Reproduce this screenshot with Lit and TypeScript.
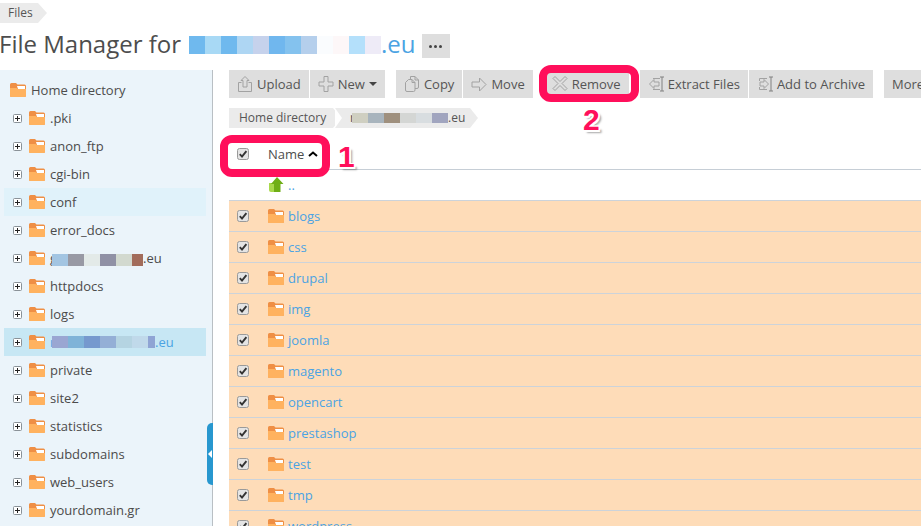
import { LitElement, css, html, svg } from "lit";
import { customElement } from "lit/decorators.js";

type Blur = string[];

const titleBlur: Blur = ["#6fb9ee", "#a8d9f5", "#6fb9ee", "#aed6f3", "#c6d2ec", "#70b7ee", "#84c2ee", "#b5cfec", "#fafcfe", "#fdf7f8", "#b4e0fb", "#eeebf7"];
const crumbBlur: Blur = ["#cfcfc1", "#a8b4bd", "#9f907e", "#d4d6d4", "#d8dde0", "#a1a5bf"];
const gBlur: Blur = ["#a3c5e2", "#9899a4", "#e3eae8", "#9091a5", "#d2d9cf", "#a26c5b"];
const siteBlur: Blur = ["#9aa6d2", "#7fb3d8", "#7699ce", "#94afd6", "#b5d4e2", "#c0d9ea", "#8fa4d4"];

const treeRows: { name: string; blur?: Blur; last?: number; cls?: string }[] = [
  { name: ".pki" },
  { name: "anon_ftp" },
  { name: "cgi-bin" },
  { name: "conf", cls: "hover" },
  { name: "error_docs" },
  { name: "g", blur: gBlur, last: 11, cls: "low" },
  { name: "httpdocs" },
  { name: "logs" },
  { name: "r", blur: siteBlur, last: 7, cls: "active" },
  { name: "private" },
  { name: "site2" },
  { name: "statistics" },
  { name: "subdomains" },
  { name: "web_users" },
  { name: "yourdomain.gr" },
];

const fileRows = ["blogs", "css", "drupal", "img", "joomla", "magento", "opencart", "prestashop", "test", "tmp", "wordpress"];

const folder = html`<svg class="folder" width="16" height="14" viewBox="0 0 16 14">
  <path d="M0 1.5Q0 0 1.5 0H6L7.5 1.5H14.5Q16 1.5 16 3V12.5Q16 14 14.5 14H1.5Q0 14 0 12.5Z" fill="#ef8f45"/>
  <path d="M7 3H15V6H8Z" fill="#fff"/>
  <path d="M0 5H6.5L8 6H16V12.5Q16 14 14.5 14H1.5Q0 14 0 12.5Z" fill="#ffb25f"/>
</svg>`;

const plus = html`<svg class="plus" width="9" height="9" viewBox="0 0 9 9">
  <rect x=".5" y=".5" width="8" height="8" rx="1" fill="#fff" stroke="#8a9298"/>
  <path d="M2 4.5H7M4.5 2V7" stroke="#222"/>
</svg>`;

const check = html`<svg class="check" width="12" height="12" viewBox="0 0 12 12">
  <rect x=".5" y=".5" width="11" height="11" rx="2" fill="#e4e4e4" stroke="#9a9a9a"/>
  <path d="M2.8 6.2L5 8.6L9.4 3.2" fill="none" stroke="#333" stroke-width="1.9"/>
</svg>`;

const icons = {
  upload: svg`<path d="M4.5 7.5H1.5V16.5H14.5V7.5H11.5"/><path d="M8 1.5L12 5.5H10V12H6V5.5H4Z"/>`,
  add: svg`<path d="M6 1.5H10V7H15V11H10V16.5H6V11H1V7H6Z"/>`,
  copy: svg`<path d="M6.5 4V1.5H11L14.5 5V12Q14.5 13.5 13 13.5H11"/><path d="M11 1.5V5H14.5"/><path d="M4.5 4.5H8L11 7.5V15Q11 16.5 9.5 16.5H3Q1.5 16.5 1.5 15V7.5Z"/><path d="M8 4.5V7.5H11"/>`,
  move: svg`<path d="M1 7H8.5V3L15 9.5L8.5 16V12H1Z"/>`,
  remove: svg`<path d="M3 1.5L8 6.5L13 1.5L15 3.5L10 8.5L15 13.5L13 15.5L8 10.5L3 15.5L1 13.5L6 8.5L1 3.5Z"/>`,
  extract: svg`<path d="M12 2H16M14 2V16M12 16H16" stroke="#808080"/><path d="M5 3.5H12M5 14.5H12"/><path d="M1.5 9L6 4.5V7H11V11H6V13.5Z"/>`,
  archive: svg`<path d="M12 2H16M14 2V16M12 16H16" stroke="#808080"/><path d="M2.5 6V3.5H10M2.5 12V14.5H10"/><path d="M3 7H7V4.5L11.5 9L7 13.5V11H3Z"/>`,
};

@customElement("app-root")
export class AppRoot extends LitElement {
  static styles = css`
    :host {
      display: block;
      position: relative;
      width: 921px;
      height: 526px;
      overflow: hidden;
      background: #fff;
      color: #4b4b4b;
      font-family: "Open Sans", sans-serif;
      font-size: 13px;
      line-height: 18px;
    }
    .crumb-top {
      display: flex;
      height: 20px;
      margin-top: 3px;
    }
    .chip {
      display: flex;
      align-items: center;
      height: 20px;
      background: #ebebeb;
      font-size: 12px;
      color: #555;
      position: relative;
    }
    .chip::after {
      content: "";
      position: absolute;
      left: 100%;
      top: 0;
      border-left: 9px solid #ebebeb;
      border-top: 10px solid transparent;
      border-bottom: 10px solid transparent;
    }
    .crumb-top .chip {
      padding: 0 0 0 8px;
      width: 30px;
    }
    .title {
      display: flex;
      align-items: center;
      height: 42px;
      padding-bottom: 5px;
      font-size: 24px;
      line-height: 30px;
      color: #4d4d4d;
      white-space: nowrap;
      margin-left: -1px;
    }
    .blue {
      color: #4ba3e3;
    }
    .blur {
      display: flex;
      height: 12px;
      flex: none;
    }
    .blur i {
      display: block;
      width: 16px;
      height: 100%;
    }
    .title .blur {
      height: 18px;
      margin-left: 8px;
      margin-top: 1px;
    }
    .stub {
      width: 2px;
      white-space: nowrap;
    }
    .dots {
      width: 28px;
      height: 24px;
      margin-left: 6px;
      margin-top: 4px;
      background: #dedede;
      display: flex;
      align-items: center;
      justify-content: center;
      gap: 2px;
    }
    .dots b {
      width: 3px;
      height: 3px;
      border-radius: 50%;
      background: #444;
    }
    .body {
      display: grid;
      grid-template-columns: 213px 1fr;
      height: 456px;
    }
    aside {
      background: #ebf4fa;
      border-right: 1px solid #b9bfc4;
      padding: 6px 6px 0 4px;
      position: relative;
    }
    .tree-row {
      display: flex;
      align-items: center;
      height: 28px;
      white-space: nowrap;
    }
    .tree-row.root {
      padding-left: 6px;
      color: #4d4d4d;
    }
    .tree-row .plus {
      margin-left: 9px;
      margin-right: 7px;
    }
    .tree-row .folder {
      margin-right: 5px;
    }
    .tree-row.hover {
      background: #e0f2fa;
    }
    .tree-row.active {
      background: #c7e7f4;
      color: #4ba3e3;
    }
    .tree-row.low .blur {
      margin-top: 4px;
    }
    .collapse {
      position: absolute;
      right: -1px;
      top: 353px;
      width: 6px;
      height: 62px;
      background: #2797cf;
      border-radius: 5px 0 0 5px;
    }
    .collapse::after {
      content: "";
      position: absolute;
      left: 1px;
      top: 27px;
      border-right: 4px solid #fff;
      border-top: 4px solid transparent;
      border-bottom: 4px solid transparent;
    }
    main {
      padding-left: 16px;
      min-width: 0;
      overflow: hidden;
    }
    .toolbar {
      display: flex;
      height: 28px;
      gap: 11px;
      white-space: nowrap;
    }
    .group {
      display: flex;
      gap: 1px;
      flex: none;
    }
    .tool {
      display: flex;
      align-items: center;
      gap: 4px;
      height: 28px;
      padding: 0 8px;
      background: #dedede;
      color: #555;
    }
    .tool svg {
      fill: none;
      stroke: #a2a2a2;
      stroke-width: 1;
      flex: none;
    }
    .caret {
      border-top: 4px solid #444;
      border-left: 4px solid transparent;
      border-right: 4px solid transparent;
    }
    .path {
      display: flex;
      height: 20px;
      margin-top: 10px;
      gap: 2px;
    }
    .path .chip {
      white-space: nowrap;
    }
    .path .home {
      width: 94px;
      padding-left: 10px;
    }
    .path .cur {
      width: 120px;
      padding-left: 15px;
    }
    .path .cur::before {
      content: "";
      position: absolute;
      left: 0;
      top: 0;
      border-left: 7px solid #fff;
      border-top: 10px solid transparent;
      border-bottom: 10px solid transparent;
    }
    .path .cur .blur {
      height: 10px;
    }
    .path .home::after,
    .path .cur::after {
      border-left-width: 8px;
    }
    .row {
      display: flex;
      align-items: center;
      height: 30px;
      border-bottom: 1px solid #ccd3da;
      padding-left: 8px;
      white-space: nowrap;
    }
    .row .check {
      margin-right: 19px;
    }
    .row .folder {
      margin-right: 4px;
    }
    .head {
      margin-top: 11px;
      color: #4d4d4d;
      border-bottom-color: #c6ced6;
    }
    .sort {
      margin-left: 4px;
    }
    .up {
      padding-left: 40px;
      color: #4ba3e3;
    }
    .up svg {
      margin-right: 4px;
    }
    .file {
      background: #fedcb8;
      color: #4ba3e3;
    }
    .mark {
      position: absolute;
      border: 8px solid #ff0f5b;
      border-radius: 12px;
      box-sizing: border-box;
    }
    .mark.one {
      left: 220px;
      top: 135px;
      width: 110px;
      height: 42px;
    }
    .mark.two {
      left: 539px;
      top: 65px;
      width: 100px;
      height: 37px;
    }
    .num {
      position: absolute;
      font-family: "Liberation Sans", sans-serif;
      font-weight: 700;
      font-size: 30px;
      line-height: 30px;
      color: #ff0f5b;
      text-shadow: -1.5px 0 #fff, 1.5px 0 #fff, 0 -1.5px #fff, 0 1.5px #fff, 1.5px 1.5px #fff, -1.5px -1.5px #fff, 1.5px -1.5px #fff, -1.5px 1.5px #fff, 3px 3px 2px rgba(0, 0, 0, 0.35);
    }
    .num.n1 {
      left: 338px;
      top: 142px;
    }
    .num.n2 {
      left: 583px;
      top: 105px;
    }
  `;

  private blur(colors: Blur, last = 16) {
    return html`<span class="blur">
      ${colors.map((c, i) => html`<i style="background:${c};width:${i === colors.length - 1 ? last : 16}px"></i>`)}
    </span>`;
  }

  private tool(icon: keyof typeof icons, label: string, caret = false) {
    return html`<div class="tool">
      <svg width="16" height="18" viewBox="0 0 16 18">${icons[icon]}</svg>
      ${label}${caret ? html`<span class="caret"></span>` : ""}
    </div>`;
  }

  render() {
    return html`
      <div class="crumb-top"><div class="chip">Files</div></div>
      <div class="title">
        File Manager for ${this.blur(titleBlur)}<span class="blue">.eu</span>
        <div class="dots"><b></b><b></b><b></b></div>
      </div>
      <div class="body">
        <aside>
          <div class="tree-row root">${folder}Home directory</div>
          ${treeRows.map((r) =>
            r.blur
              ? html`<div class="tree-row ${r.cls ?? ""}">
                  ${plus}${folder}<span class="stub">${r.name}</span>${this.blur(r.blur, r.last)}.eu
                </div>`
              : html`<div class="tree-row ${r.cls ?? ""}">${plus}${folder}${r.name}</div>`
          )}
          <div class="collapse"></div>
        </aside>
        <main>
          <div class="toolbar">
            <div class="group">${this.tool("upload", "Upload")} ${this.tool("add", "New", true)}</div>
            <div class="group">${this.tool("copy", "Copy")} ${this.tool("move", "Move")}</div>
            <div class="group">${this.tool("remove", "Remove")}</div>
            <div class="group">${this.tool("extract", "Extract Files")} ${this.tool("archive", "Add to Archive")}</div>
            <div class="group"><div class="tool">More</div></div>
          </div>
          <div class="path">
            <div class="chip home">Home directory</div>
            <div class="chip cur"><span class="stub">r</span>${this.blur(crumbBlur)}.eu</div>
          </div>
          <div class="row head">
            ${check}Name
            <svg class="sort" width="10" height="6" viewBox="0 0 10 6"><path d="M1 5L5 1.5L9 5" fill="none" stroke="#000" stroke-width="2"/></svg>
          </div>
          <div class="row up">
            <svg width="15" height="16" viewBox="0 0 15 16">
              <path d="M0 6H6V15H2Q0 15 0 13Z" fill="#a9d94c"/>
              <path d="M8 0L14.5 7H11.5V15H5V7H2Z" fill="#6fae16"/>
            </svg>
            ..
          </div>
          ${fileRows.map((f) => html`<div class="row file">${check}${folder}${f}</div>`)}
        </main>
      </div>
      <div class="mark one"></div>
      <div class="num n1">1</div>
      <div class="mark two"></div>
      <div class="num n2">2</div>
    `;
  }
}
